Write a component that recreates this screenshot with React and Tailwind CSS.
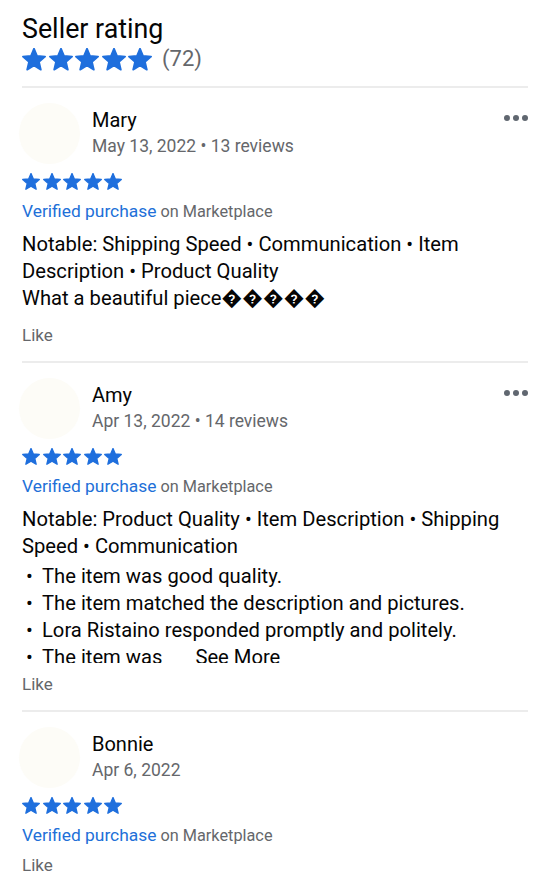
import React from 'react';

const BLUE = '#1f6fdd';

function Star({ size }) {
    return (
        <svg
            width={size}
            height={size * 0.95}
            viewBox="1.2 1.4 21.6 20.6"
            fill={BLUE}
            stroke={BLUE}
            strokeWidth="1.6"
            strokeLinejoin="round"
        >
            <path d="M12 17.27L18.18 21l-1.64-7.03L22 9.24l-7.19-.61L12 2 9.19 8.63 2 9.24l5.46 4.73L5.82 21z" />
        </svg>
    );
}

function Stars({ size, gap }) {
    return (
        <div className={`flex items-center ${gap}`}>
            {[0, 1, 2, 3, 4].map(i => (
                <Star key={i} size={size} />
            ))}
        </div>
    );
}

function Dots() {
    return (
        <div className="absolute right-0 top-[27px] flex gap-[3px]">
            <span className="w-[6px] h-[6px] rounded-full bg-[#606770]" />
            <span className="w-[6px] h-[6px] rounded-full bg-[#606770]" />
            <span className="w-[6px] h-[6px] rounded-full bg-[#606770]" />
        </div>
    );
}

function Review({ name, meta, children, more, likeGap = 'mt-[8px]' }) {
    return (
        <div className="relative pt-[15px] pb-[15px]">
            {more && <Dots />}
            <div className="flex items-start">
                <div className="w-[61px] h-[61px] -ml-[3px] rounded-full bg-[#fdfcf7]" />
                <div className="ml-[12px] pt-[4px]">
                    <div className="text-[20px] leading-[26px] text-[#050505]">{name}</div>
                    <div className="text-[17.5px] leading-[26px] text-[#65676b]">{meta}</div>
                </div>
            </div>
            <div className="mt-[9px]">
                <Stars size={18} gap="gap-[2.5px]" />
            </div>
            <div className="mt-[10px] flex h-[22px] items-baseline leading-[22px]">
                <span className="text-[17.4px] text-[#216fd8]">Verified purchase</span>
                <span className="ml-[4px] text-[16.3px] text-[#65676b]">on Marketplace</span>
            </div>
            {children}
            <div className={`${likeGap} text-[17px] leading-[22px] text-[#65676b]`}>Like</div>
        </div>
    );
}

function Divider() {
    return <div className="h-[2px] bg-[#ececec]" />;
}

export default function App() {
    return (
        <div className="min-h-screen bg-white px-[22px] font-['Roboto',sans-serif] text-[#050505]">
            <div className="pt-[13px] pb-[15px]">
                <h1 className="text-[26.8px] leading-[32px] text-[#050505]">Seller rating</h1>
                <div className="mt-[3px] flex items-center gap-[10px]">
                    <Stars size={24} gap="gap-[2.5px]" />
                    <span className="text-[22px] leading-[22px] text-[#65676b]">(72)</span>
                </div>
            </div>
            <Divider />

            <Review name="Mary" meta="May 13, 2022 • 13 reviews" more likeGap="mt-[12px]">
                <div className="mt-[9px] text-[20.2px] leading-[27px] text-[#050505]">
                    <p>Notable: Shipping Speed • Communication • Item Description • Product Quality</p>
                    <p>What a beautiful piece�����</p>
                </div>
            </Review>
            <Divider />

            <Review name="Amy" meta="Apr 13, 2022 • 14 reviews" more likeGap="mt-[10px]">
                <div className="mt-[9px] h-[157px] overflow-hidden text-[20.2px] leading-[27px] text-[#050505]">
                    <p>Notable: Product Quality • Item Description • Shipping Speed • Communication</p>
                    <ul className="mt-[3px]">
                        <li className="flex"><span className="w-[20px] pl-[4px]">•</span>The item was good quality.</li>
                        <li className="flex"><span className="w-[20px] pl-[4px]">•</span>The item matched the description and pictures.</li>
                        <li className="flex"><span className="w-[20px] pl-[4px]">•</span>Lora Ristaino responded promptly and politely.</li>
                        <li className="flex"><span className="w-[20px] pl-[4px]">•</span>The item was<span className="ml-[33px]">See More</span></li>
                    </ul>
                </div>
            </Review>
            <Divider />

            <Review name="Bonnie" meta="Apr 6, 2022" />
            <Divider />
        </div>
    );
}
